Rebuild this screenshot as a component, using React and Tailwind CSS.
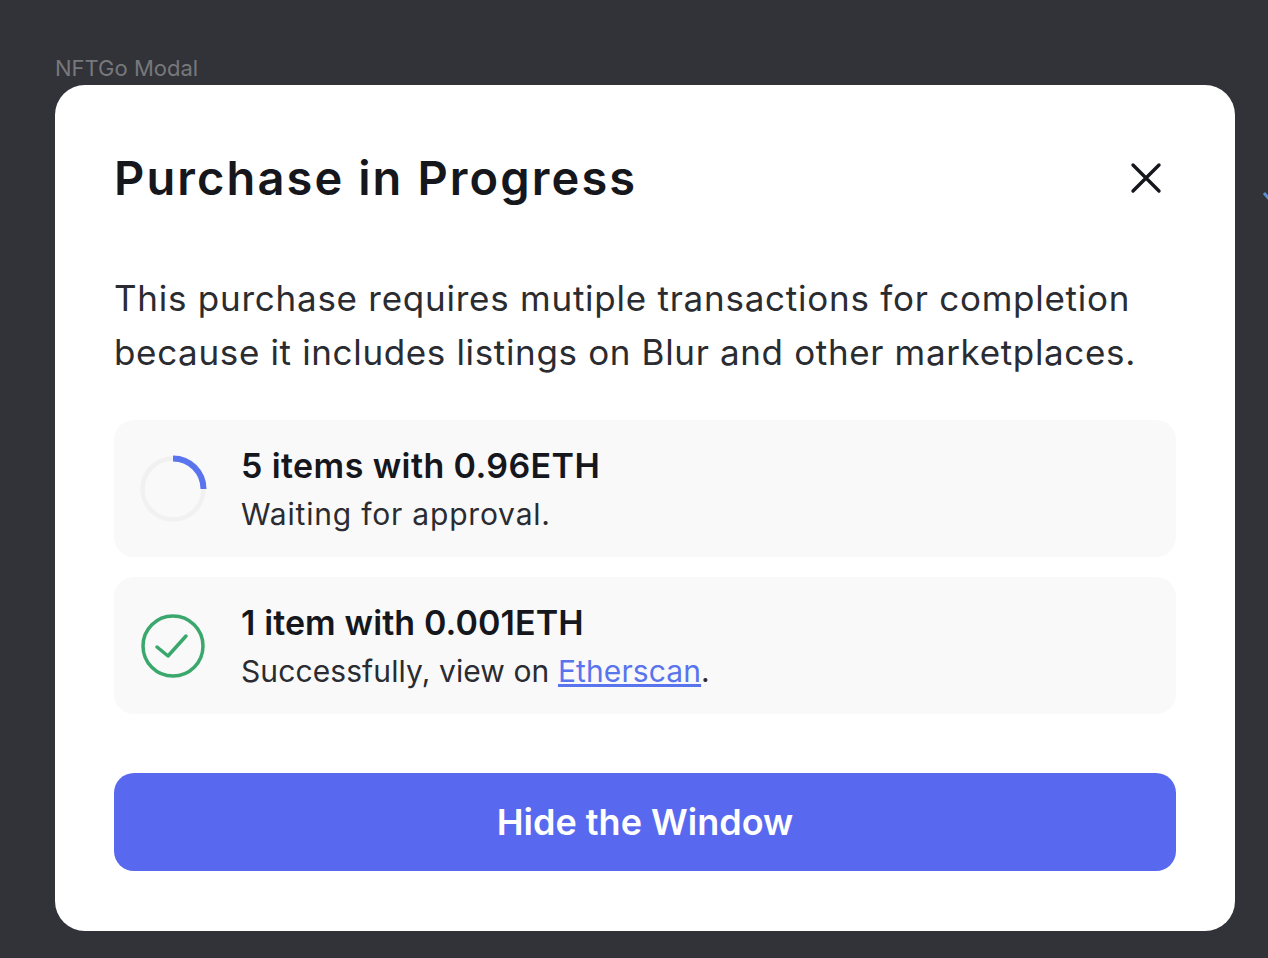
export default function App() {
  return (
    <div className="h-[958px] w-[1268px] overflow-hidden relative bg-[#323338] pl-[55px] pr-[33px] pt-[55px] font-['Inter',sans-serif]">
      <div className="h-[30px] text-[22px] leading-[27px] text-[#77787c]">NFTGo Modal</div>
      <div className="h-[846px] rounded-[30px] bg-white pl-[59px] pr-[59px] pt-[60px]">
        <div className="flex h-[66px] items-center justify-between">
          <h1 className="text-[47px] leading-[66px] font-semibold text-[#15171c] tracking-[2.1px]">Purchase in Progress</h1>
          <svg width="34" height="34" viewBox="0 0 34 34" className="mr-[13px]" fill="none" stroke="#15171c" strokeWidth="3.4" strokeLinecap="round">
            <path d="M4 4 L30 30 M30 4 L4 30" />
          </svg>
        </div>
        <p className="mt-[60px] text-[35px] leading-[54px] text-[#2a2c31] whitespace-nowrap">
          <span className="tracking-[0.75px]">This purchase requires mutiple transactions for completion</span>
          <br />
          <span className="tracking-[0.65px]">because it includes listings on Blur and other marketplaces.</span>
        </p>
        <div className="mt-[41px] flex flex-col gap-[20px]">
          <div className="flex h-[137px] items-center rounded-[20px] bg-[#f9f9f9] pl-[25px]">
            <svg width="68" height="68" viewBox="0 0 68 68" fill="none" strokeWidth="4.5">
              <circle cx="34" cy="34" r="30.5" stroke="#f1f1f1" />
              <path d="M34 3.5 A30.5 30.5 0 0 1 64.5 34" stroke="#5a74ee" strokeWidth="6" />
            </svg>
            <div className="ml-[34px] pt-[2px]">
              <div className="text-[34px] leading-[48px] font-semibold text-[#15171c] tracking-[0.4px]">5 items with 0.96ETH</div>
              <div className="text-[30px] leading-[48px] text-[#2a2c31] tracking-[0.8px]">Waiting for approval.</div>
            </div>
          </div>
          <div className="flex h-[137px] items-center rounded-[20px] bg-[#f9f9f9] pl-[25px]">
            <svg width="68" height="68" viewBox="0 0 68 68" fill="none" stroke="#3aa76d" strokeWidth="3.5" strokeLinecap="round" strokeLinejoin="round">
              <circle cx="34" cy="34" r="30" />
              <path d="M18 35 L29 44 L47 24" />
            </svg>
            <div className="ml-[34px] pt-[2px]">
              <div className="text-[34px] leading-[48px] font-semibold text-[#15171c] tracking-[0.1px]">1 item with 0.001ETH</div>
              <div className="text-[30px] leading-[48px] text-[#2a2c31] tracking-[0.1px]">
                Successfully, view on <a className="text-[#5a74ee] underline">Etherscan</a>.
              </div>
            </div>
          </div>
        </div>
        <button className="mt-[59px] flex h-[98px] w-full items-center justify-center rounded-[20px] bg-[#5869ef] text-[36px] font-semibold text-white">
          Hide the Window
        </button>
      </div>
      <svg width="8" height="14" viewBox="0 0 8 14" className="absolute left-[1262px] top-[190px]" fill="none">
        <path d="M2 3 L8 10" stroke="#5b8fd0" strokeWidth="3" />
      </svg>
    </div>
  );
}
